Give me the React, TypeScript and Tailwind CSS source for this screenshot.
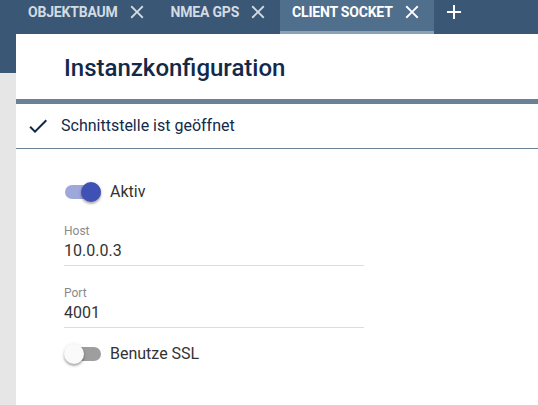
import { FC } from 'react';

const CloseIcon: FC<{ className?: string }> = ({ className }) => (
  <svg viewBox="0 0 24 24" className={className} fill="currentColor">
    <path d="M19 6.41 17.59 5 12 10.59 6.41 5 5 6.41 10.59 12 5 17.59 6.41 19 12 13.41 17.59 19 19 17.59 13.41 12z" />
  </svg>
);

const Tab: FC<{ label: string; active?: boolean }> = ({ label, active }) => (
  <div
    className={`relative flex h-full items-center pb-[11px] pl-3 pr-[11px] ${
      active ? 'bg-[#506f8c] text-white' : 'text-[#d3dbe3]'
    }`}
  >
    <span className="text-[14px] font-bold leading-none tracking-[-0.2px]">{label}</span>
    <CloseIcon className="ml-2 h-[22px] w-[22px]" />
    {active && <div className="absolute bottom-0 left-0 h-[3px] w-full bg-[#8aa1b6]" />}
  </div>
);

const Toggle: FC<{ on?: boolean; label: string }> = ({ on, label }) => (
  <div className="flex h-6 items-center">
    <div className="relative h-5 w-[38px]">
      <div
        className={`absolute left-[1px] top-[3px] h-[14px] w-9 rounded-full ${
          on ? 'bg-[#9fa8da]' : 'bg-[#9e9e9e]'
        }`}
      />
      <div
        className={`absolute top-0 h-5 w-5 rounded-full shadow-[0_2px_2px_rgba(0,0,0,0.25),0_1px_4px_rgba(0,0,0,0.15)] ${
          on ? 'left-[17px] bg-[#3f51b5]' : 'left-0 bg-[#fafafa]'
        }`}
      />
    </div>
    <span className="ml-[8px] text-[16px] leading-6 text-[#333]">{label}</span>
  </div>
);

const Field: FC<{ label: string; value: string }> = ({ label, value }) => (
  <div className="flex w-[300px] flex-col border-b border-[#dcdcdc] pb-1">
    <span className="text-[12px] leading-[13px] text-[#8a8a8a]">{label}</span>
    <span className="mt-[3px] text-[16px] leading-5 text-[#333]">{value}</span>
  </div>
);

export default function App() {
  return (
    <div className="flex h-[405px] w-full flex-col overflow-hidden bg-[#e6e6e6] font-['Roboto',sans-serif]">
      <div className="flex h-[34px] shrink-0 items-stretch bg-[#3a5875] pl-4">
        <Tab label="OBJEKTBAUM" />
        <Tab label="NMEA GPS" />
        <Tab label="CLIENT SOCKET" active />
        <div className="flex items-center pb-[11px] pl-2 text-white">
          <svg viewBox="0 0 24 24" className="h-6 w-6" fill="currentColor">
            <path d="M19 13h-6v6h-2v-6H5v-2h6V5h2v6h6v2z" />
          </svg>
        </div>
      </div>
      <div className="flex flex-1">
        <div className="w-4 shrink-0">
          <div className="h-[39px] bg-[#3a5875]" />
        </div>
        <div className="flex flex-1 flex-col bg-white">
          <div className="pb-[15px] pl-12 pt-[18px]">
            <h1 className="text-[24px] font-medium leading-8 text-[#12294a]">Instanzkonfiguration</h1>
          </div>
          <div className="h-[5px] bg-[#6b8198]" />
          <div className="flex h-[45px] items-center border-b border-[#6b8198] pl-[10px]">
            <svg viewBox="0 0 24 24" className="h-6 w-6 text-[#12294a]" fill="currentColor">
              <path d="M9 16.17 4.83 12l-1.42 1.41L9 19 21 7l-1.41-1.41z" />
            </svg>
            <span className="ml-[11px] text-[16px] leading-6 text-[#12294a]">Schnittstelle ist geöffnet</span>
          </div>
          <div className="flex flex-col pl-12 pt-[31px]">
            <Toggle on label="Aktiv" />
            <div className="mt-[21px]">
              <Field label="Host" value="10.0.0.3" />
            </div>
            <div className="mt-[21px]">
              <Field label="Port" value="4001" />
            </div>
            <div className="mt-[14px]">
              <Toggle label="Benutze SSL" />
            </div>
          </div>
        </div>
      </div>
    </div>
  );
}
